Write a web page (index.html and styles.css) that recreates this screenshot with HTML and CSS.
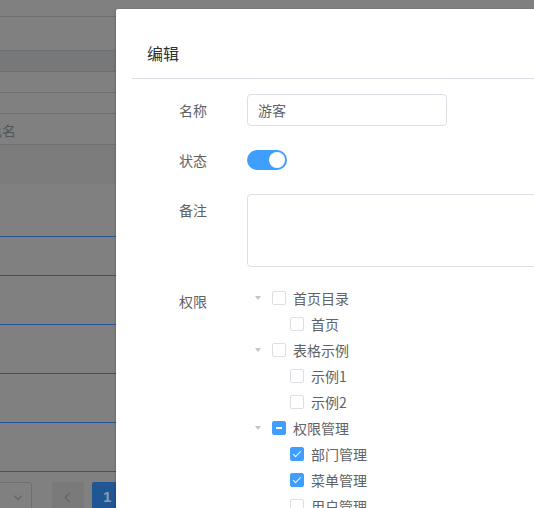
FILE: index.html
```html
<!DOCTYPE html>
<html lang="zh-CN">
<head>
<meta charset="utf-8">
<title>编辑</title>
<link rel="stylesheet" href="styles.css">
</head>
<body>
<div class="page">
  <div class="bg">
    <div class="bg-row r16"></div>
    <div class="bg-row r33"></div>
    <div class="bg-row r20 dark"></div>
    <div class="bg-row r20"></div>
    <div class="bg-row r20"></div>
    <div class="bg-row r30 with-text"><span class="bg-text">角色名</span></div>
    <div class="bg-row r38 mid noline"></div>
    <div class="bg-row r53 blue"></div>
    <div class="bg-row r38 blue"></div>
    <div class="bg-row r48 blue"></div>
    <div class="bg-row r48 blue"></div>
    <div class="bg-row r48 blue"></div>
    <div class="bg-row r48 blue"></div>
    <div class="pager">
      <div class="pg-select"><span class="chev-down"></span></div>
      <div class="pg-prev"><span class="chev-left"></span></div>
      <div class="pg-num">1</div>
    </div>
  </div>

  <div class="dialog">
    <div class="dlg-header"><span class="dlg-title">编辑</span></div>
    <div class="dlg-body">
      <div class="form-item">
        <label class="form-label">名称</label>
        <div class="form-content"><div class="input">游客</div></div>
      </div>
      <div class="form-item">
        <label class="form-label">状态</label>
        <div class="form-content"><span class="switch"><span class="knob"></span></span></div>
      </div>
      <div class="form-item">
        <label class="form-label">备注</label>
        <div class="form-content"><div class="textarea"></div></div>
      </div>
      <div class="form-item">
        <label class="form-label">权限</label>
        <div class="form-content">
          <div class="tree">
            <div class="node lv1"><span class="caret"></span><span class="cb"></span><span class="node-label">首页目录</span></div>
            <div class="node lv2"><span class="caret none"></span><span class="cb"></span><span class="node-label">首页</span></div>
            <div class="node lv1"><span class="caret"></span><span class="cb"></span><span class="node-label">表格示例</span></div>
            <div class="node lv2"><span class="caret none"></span><span class="cb"></span><span class="node-label">示例1</span></div>
            <div class="node lv2"><span class="caret none"></span><span class="cb"></span><span class="node-label">示例2</span></div>
            <div class="node lv1"><span class="caret"></span><span class="cb indeterminate"></span><span class="node-label">权限管理</span></div>
            <div class="node lv2"><span class="caret none"></span><span class="cb checked"></span><span class="node-label">部门管理</span></div>
            <div class="node lv2"><span class="caret none"></span><span class="cb checked"></span><span class="node-label">菜单管理</span></div>
            <div class="node lv2"><span class="caret none"></span><span class="cb"></span><span class="node-label">用户管理</span></div>
          </div>
        </div>
      </div>
    </div>
  </div>
</div>
</body>
</html>
```

FILE: styles.css
```css
* { box-sizing: border-box; }
html, body {
  margin: 0;
  padding: 0;
  width: 534px;
  height: 508px;
  overflow: hidden;
  font-family: "Noto Sans CJK SC", "Noto Sans", "Liberation Sans", sans-serif;
}
.page {
  position: relative;
  width: 534px;
  height: 508px;
  overflow: hidden;
  background: #808080;
}

/* dimmed background page */
.bg {
  display: flex;
  flex-direction: column;
  width: 534px;
}
.bg-row {
  border-bottom: 1px solid #6e6f71;
  flex: none;
}
.bg-row.noline { border-bottom: none; height: 39px; }
.r16 { height: 17px; }
.r20 { height: 21px; }
.r30 { height: 31px; }
.r33 { height: 34px; }
.r38 { height: 39px; }
.r48 { height: 49px; }
.r53 { height: 53px; }
.dark { background: #77787a; }
.mid { background: #7c7c7d; }
.bg-row.blue { border-bottom-color: #24579a; }
.with-text {
  display: flex;
  align-items: center;
  justify-content: flex-end;
  width: 534px;
  position: relative;
}
.bg-text {
  position: absolute;
  right: 518px;
  top: 6px;
  font-size: 14px;
  line-height: 20px;
  color: #545557;
  white-space: nowrap;
}
.pager {
  display: flex;
  align-items: flex-start;
  margin-top: 10px;
  height: 30px;
}
.pg-select {
  width: 36px;
  height: 30px;
  margin-left: -4px;
  border: 1px solid #6e6f71;
  border-radius: 3px;
  display: flex;
  align-items: center;
  justify-content: center;
  padding-left: 8px;
}
.chev-down {
  width: 6px;
  height: 6px;
  border-right: 1px solid #5f6063;
  border-bottom: 1px solid #5f6063;
  transform: rotate(45deg);
  margin-top: -2px;
}
.pg-prev {
  width: 32px;
  height: 30px;
  margin-left: 20px;
  background: #7a7a7b;
  border-radius: 2px;
  display: flex;
  align-items: center;
  justify-content: center;
}
.chev-left {
  width: 7px;
  height: 7px;
  border-left: 1px solid #5f6063;
  border-bottom: 1px solid #5f6063;
  transform: rotate(45deg);
  margin-left: 3px;
}
.pg-num {
  width: 30px;
  height: 30px;
  margin-left: 8px;
  background: #215694;
  border-radius: 2px;
  color: #8a9cb3;
  font-family: "Liberation Sans", Arial, sans-serif;
  font-weight: bold;
  font-size: 15px;
  line-height: 30px;
  padding-left: 11px;
}

/* dialog */
.dialog {
  position: absolute;
  left: 116px;
  top: 9px;
  width: 520px;
  height: 560px;
  background: #fff;
  border-radius: 2px;
  box-shadow: 0 1px 3px rgba(0, 0, 0, 0.3);
}
.dlg-header {
  margin-left: 16px;
  padding: 32px 0 13px 15px;
  border-bottom: 1px solid #dcdfe6;
  height: 70px;
}
.dlg-title {
  display: block;
  font-size: 16px;
  line-height: 24px;
  color: #303133;
}
.dlg-body {
  padding: 15px 0 0 63px;
}
.form-item {
  display: flex;
  align-items: flex-start;
  margin-bottom: 18px;
}
.form-label {
  flex: none;
  width: 68px;
  font-size: 14px;
  line-height: 32px;
  color: #606266;
}
.form-content {
  flex: 1;
  min-height: 32px;
  display: flex;
  align-items: center;
}
.input {
  width: 200px;
  height: 32px;
  border: 1px solid #dcdfe6;
  border-radius: 4px;
  padding: 0 10px;
  font-size: 14px;
  line-height: 30px;
  color: #606266;
}
.switch {
  position: relative;
  display: block;
  width: 40px;
  height: 20px;
  border-radius: 10px;
  background: #409eff;
}
.knob {
  position: absolute;
  top: 2px;
  right: 2px;
  width: 16px;
  height: 16px;
  border-radius: 50%;
  background: #fff;
}
.textarea {
  width: 400px;
  height: 73px;
  border: 1px solid #dcdfe6;
  border-radius: 4px;
}

/* tree */
.tree {
  display: flex;
  flex-direction: column;
}
.node {
  display: flex;
  align-items: center;
  height: 26px;
}
.node.lv2 { padding-left: 18px; }
.caret {
  width: 23px;
  height: 26px;
  flex: none;
  display: flex;
  align-items: center;
  justify-content: center;
  padding-right: 0;
}
.caret::before {
  content: "";
  display: block;
  width: 0;
  height: 0;
  border-left: 3.5px solid transparent;
  border-right: 3.5px solid transparent;
  border-top: 4px solid #c0c4cc;
  margin-left: -1px;
  margin-top: -1px;
}
.caret.none::before { display: none; }
.cb {
  position: relative;
  flex: none;
  width: 14px;
  height: 14px;
  margin: 0 7px 0 2px;
  border: 1px solid #dcdfe6;
  border-radius: 2px;
  background: #fff;
}
.cb.checked, .cb.indeterminate {
  background: #409eff;
  border-color: #409eff;
}
.cb.checked::after {
  content: "";
  position: absolute;
  left: 4px;
  top: 1px;
  width: 3px;
  height: 7px;
  border-right: 1px solid #fff;
  border-bottom: 1px solid #fff;
  transform: rotate(45deg);
}
.cb.indeterminate::after {
  content: "";
  position: absolute;
  left: 3px;
  top: 5px;
  width: 6px;
  height: 2px;
  background: #fff;
}
.node-label {
  font-size: 14px;
  line-height: 20px;
  color: #606266;
  white-space: nowrap;
}
```
